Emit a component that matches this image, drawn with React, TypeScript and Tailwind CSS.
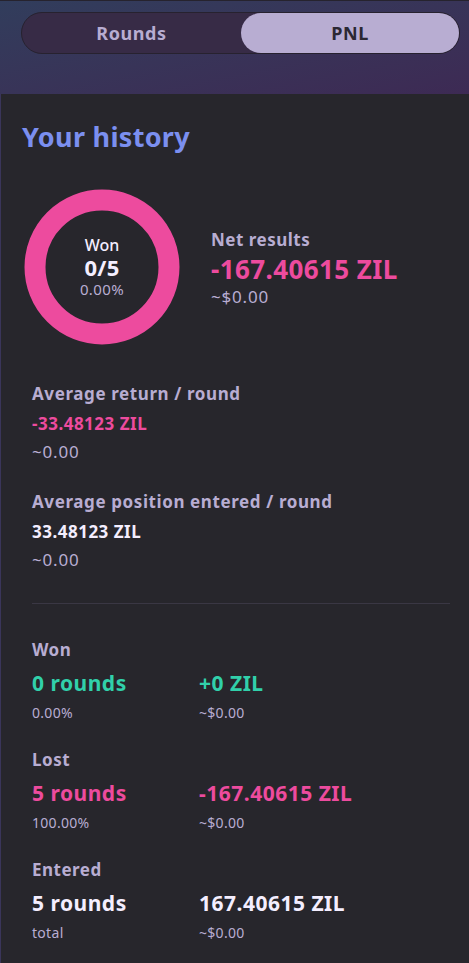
import React from "react";

const Stat = ({ label, value, valueClass, sub }: { label: string; value: string; valueClass: string; sub: string }) => (
  <div className="flex flex-col">
    <div className="text-[17px] leading-[24px] font-bold tracking-[0.6px] text-[#b8add2]">{label}</div>
    <div className={`text-[17px] leading-[24px] font-bold tracking-[0.5px] mt-[6px] ${valueClass}`}>{value}</div>
    <div className="text-[17px] leading-[24px] tracking-[0.8px] text-[#b8add2] mt-[4px]">{sub}</div>
  </div>
);

const Row = ({ label, left, right, color, leftSub, rightSub }: { label: string; left: string; right: string; color: string; leftSub: string; rightSub: string }) => (
  <div className="flex flex-col">
    <div className="text-[17px] leading-[24px] font-bold tracking-[0.5px] text-[#b8add2]">{label}</div>
    <div className="grid grid-cols-[167px_1fr] mt-[7px]">
      <div className={`text-[21px] leading-[28px] font-bold tracking-[0.5px] ${color}`}>{left}</div>
      <div className={`text-[21px] leading-[28px] font-bold tracking-[0.5px] ${color}`}>{right}</div>
    </div>
    <div className="grid grid-cols-[167px_1fr] mt-[7px]">
      <div className="text-[14px] leading-[18px] tracking-[0.3px] text-[#b8add2]">{leftSub}</div>
      <div className="text-[14px] leading-[18px] tracking-[0.3px] text-[#b8add2]">{rightSub}</div>
    </div>
  </div>
);

export default function App() {
  return (
    <div
      className="w-[469px] h-[963px] bg-[#27262c] overflow-hidden flex flex-col"
      style={{ fontFamily: '"Noto Sans", "Liberation Sans", sans-serif' }}
    >
      <div className="h-[94px] shrink-0 border-t border-[#26232e] bg-gradient-to-br from-[#313d5c] to-[#3d2a54] px-[21px] pt-[11px]">
        <div className="h-[42px] w-[439px] rounded-[21px] bg-[#372b46] border border-[#27222f] flex items-center">
          <div className="flex-1 h-full flex items-center justify-center text-[18px] font-bold tracking-[0.6px] text-[#b8add2]">Rounds</div>
          <div className="w-[218px] h-[40px] rounded-[20px] bg-[#b8add2] flex items-center justify-center text-[18px] font-bold tracking-[0.6px] text-[#2b2833]">PNL</div>
        </div>
      </div>
      <div className="flex-1 flex flex-row">
        <div className="w-[1px] bg-[#3a355a]" />
        <div className="flex-1 flex flex-col pl-[21px] pr-[18px]">
          <div className="mt-[26px] text-[27px] leading-[34px] font-bold tracking-[0.3px] text-[#7b8ff0]">Your history</div>
          <div className="flex flex-row items-start mt-[35px]">
            <div className="relative w-[156px] h-[156px] shrink-0 ml-[2px]">
              <svg width="156" height="156" viewBox="0 0 156 156">
                <circle cx="78" cy="78" r="67" fill="none" stroke="#ed4b9e" strokeWidth="21" />
              </svg>
              <div className="absolute inset-0 flex flex-col items-center justify-center">
                <div className="text-[16px] leading-none font-medium text-[#f4eeff]">Won</div>
                <div className="text-[22px] leading-none font-bold tracking-[0.3px] text-[#f4eeff] mt-[3px]">0/5</div>
                <div className="text-[15px] leading-none tracking-[0.4px] text-[#b8add2] mt-[4px]">0.00%</div>
              </div>
            </div>
            <div className="flex flex-col ml-[31px] mt-[39px]">
              <div className="text-[17px] leading-[24px] font-bold tracking-[0.5px] text-[#b8add2]">Net results</div>
              <div className="text-[26px] leading-[34px] font-bold tracking-[0.4px] text-[#ed4b9e]">-167.40615 ZIL</div>
              <div className="text-[17px] leading-[22px] tracking-[0.8px] text-[#b8add2]">~$0.00</div>
            </div>
          </div>
          <div className="flex flex-col pl-[10px] mt-[37px] gap-[26px]">
            <Stat label="Average return / round" value="-33.48123 ZIL" valueClass="text-[#ed4b9e]" sub="~0.00" />
            <Stat label="Average position entered / round" value="33.48123 ZIL" valueClass="text-[#f4eeff]" sub="~0.00" />
          </div>
          <div className="h-[1px] bg-[#3a3744] mt-[31px] ml-[10px] mr-[1px]" />
          <div className="flex flex-col pl-[10px] mt-[34px] gap-[26px]">
            <Row label="Won" left="0 rounds" right="+0 ZIL" color="text-[#31d0aa]" leftSub="0.00%" rightSub="~$0.00" />
            <Row label="Lost" left="5 rounds" right="-167.40615 ZIL" color="text-[#ed4b9e]" leftSub="100.00%" rightSub="~$0.00" />
            <Row label="Entered" left="5 rounds" right="167.40615 ZIL" color="text-[#f4eeff]" leftSub="total" rightSub="~$0.00" />
          </div>
        </div>
      </div>
    </div>
  );
}
